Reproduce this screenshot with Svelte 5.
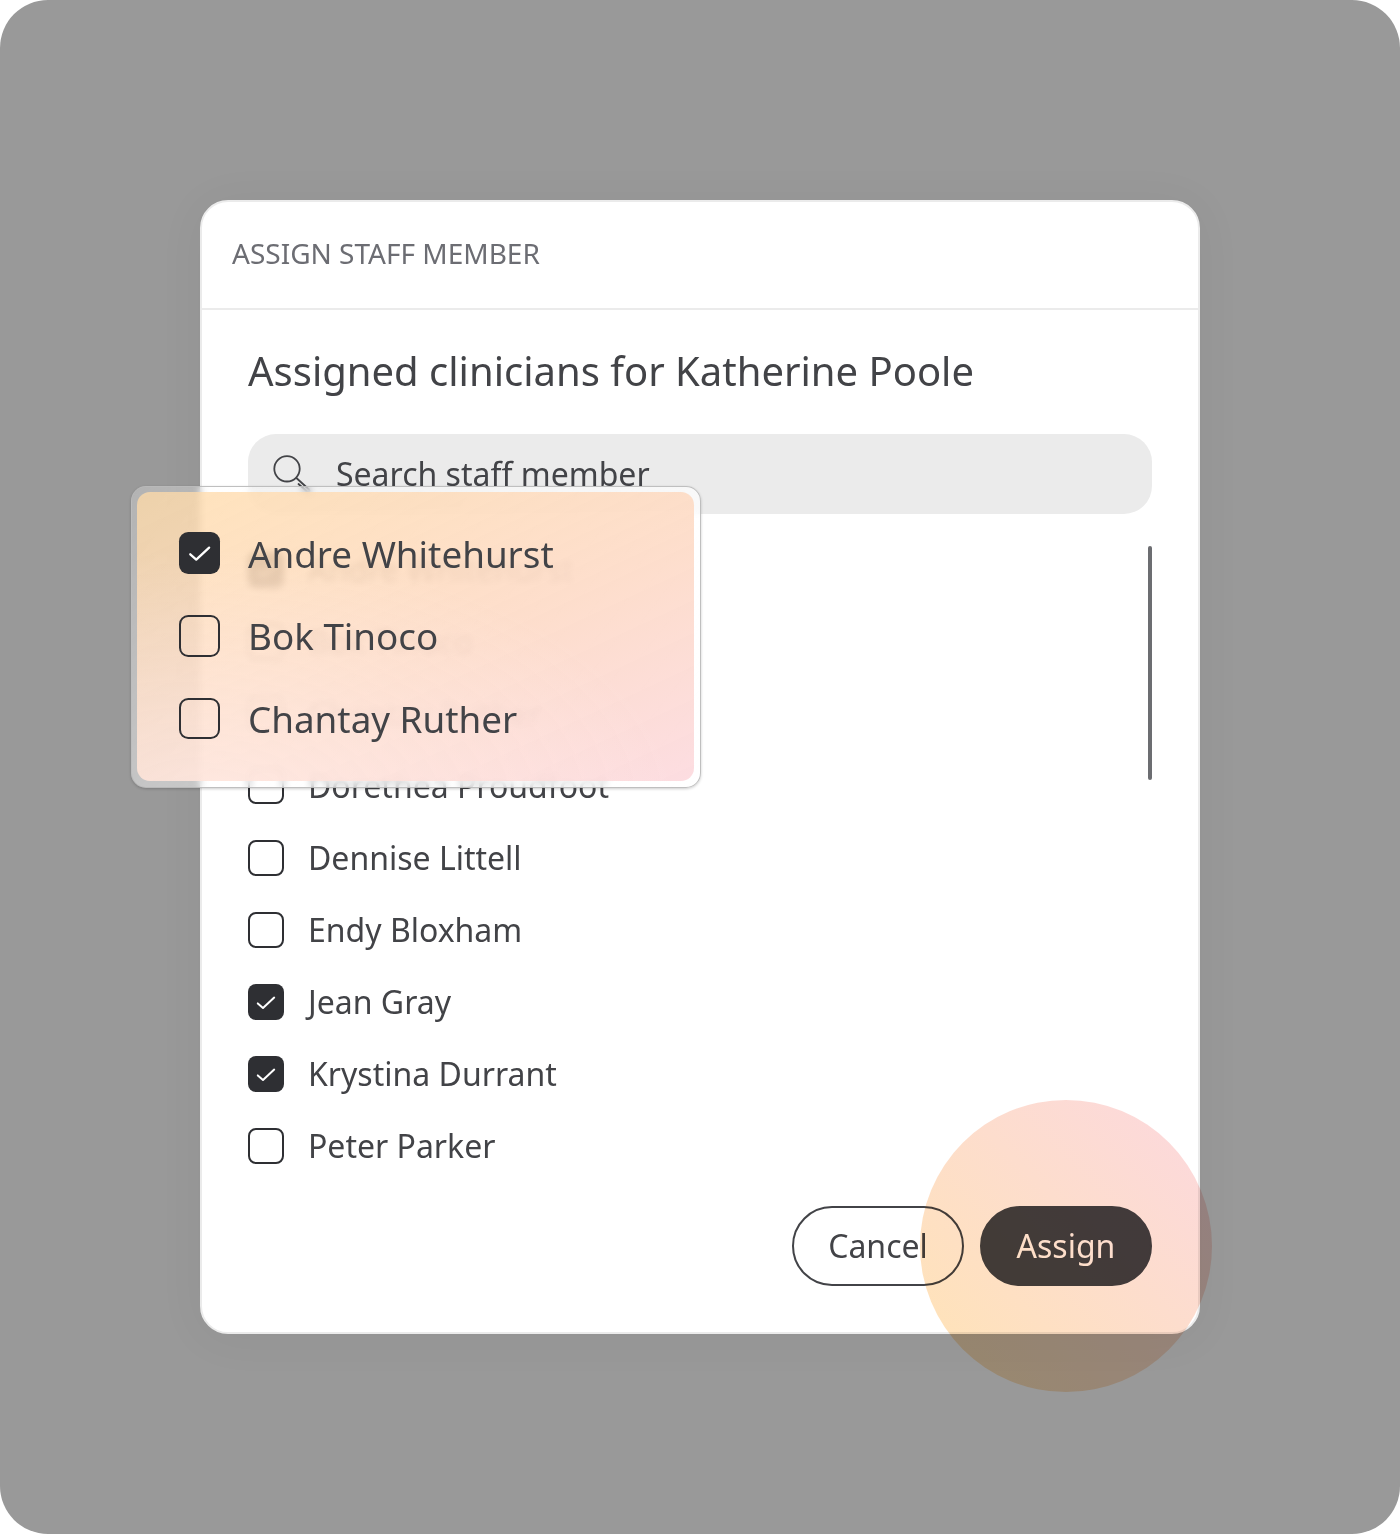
<script>
  const staff = [
    { name: 'Andre Whitehurst', checked: true },
    { name: 'Bok Tinoco', checked: false },
    { name: 'Chantay Ruther', checked: false },
    { name: 'Dorethea Proudfoot', checked: false },
    { name: 'Dennise Littell', checked: false },
    { name: 'Endy Bloxham', checked: false },
    { name: 'Jean Gray', checked: true },
    { name: 'Krystina Durrant', checked: true },
    { name: 'Peter Parker', checked: false }
  ];
  const highlighted = staff.slice(0, 3);
</script>

{#snippet row(person)}
  <li class="row">
    <span class="box" class:checked={person.checked}>
      {#if person.checked}
        <svg class="tick" viewBox="0 0 36 36" fill="none">
          <path d="M9.8 19.4L15 24L26.2 13.6" stroke="#fff" stroke-width="2" stroke-linecap="round" stroke-linejoin="round" />
        </svg>
      {/if}
    </span>
    <span class="name">{person.name}</span>
  </li>
{/snippet}

<main class="backdrop">
  <section class="dialog">
    <header class="head">ASSIGN STAFF MEMBER</header>
    <div class="body">
      <h1>Assigned clinicians for Katherine Poole</h1>
      <div class="search">
        <svg class="glass" viewBox="0 0 40 40" fill="none" stroke="#424347" stroke-width="1.8" stroke-linecap="round" stroke-linejoin="round">
          <circle cx="15" cy="14.8" r="12.7" />
          <path d="M24.4 24L37 35.5Q38.500 38 36 38.500L26.500 30" />
        </svg>
        <span>Search staff member</span>
      </div>
      <div class="list-wrap">
        <ul class="list">
          {#each staff as person}
            {@render row(person)}
          {/each}
        </ul>
        <div class="scrollbar"></div>
      </div>
      <footer class="actions">
        <button class="btn">Cancel</button>
        <button class="btn primary">Assign</button>
      </footer>
    </div>
  </section>

  <div class="spot"></div>

  <aside class="callout">
    <ul class="panel">
      {#each highlighted as person}
        {@render row(person)}
      {/each}
    </ul>
  </aside>
</main>

<style>
  :global(body) {
    background: #fff;
  }
  .backdrop {
    position: relative;
    box-sizing: border-box;
    width: 1400px;
    height: 1534px;
    padding: 200px;
    border-radius: 48px;
    background: #999;
    overflow: hidden;
    font-family: 'Noto Sans', sans-serif;
    color: #424347;
  }
  .dialog {
    box-sizing: border-box;
    width: 1000px;
    height: 1134px;
    border: 2px solid #ebebeb;
    border-radius: 28px;
    background: #fff;
    box-shadow: 0 4px 48px rgba(0, 0, 0, 0.05);
  }
  .head {
    box-sizing: border-box;
    height: 108px;
    padding: 0 30px;
    border-bottom: 2px solid #ebebeb;
    font-size: 28px;
    line-height: 102px;
    color: #6c6d73;
  }
  .body {
    padding: 31px 46px 46px;
  }
  h1 {
    margin: 0;
    font-size: 40px;
    line-height: 60px;
    font-weight: 400;
  }
  .search {
    display: flex;
    align-items: center;
    gap: 24px;
    box-sizing: border-box;
    height: 80px;
    margin-top: 33px;
    padding: 0 24px 1px;
    border-radius: 28px;
    background: #ebebeb;
    font-size: 32px;
  }
  .glass {
    width: 40px;
    height: 40px;
  }
  .list-wrap {
    display: flex;
    justify-content: space-between;
    height: 624px;
    margin-top: 32px;
  }
  ul {
    margin: 0;
    padding: 0;
    list-style: none;
  }
  .list {
    display: flex;
    flex-direction: column;
    gap: 24px;
  }
  .row {
    display: flex;
    align-items: center;
    gap: 24px;
    height: 48px;
    font-size: 32px;
    line-height: 48px;
    white-space: nowrap;
  }
  .box {
    flex: none;
    box-sizing: border-box;
    width: 36px;
    height: 36px;
    border: 2px solid #2e2f33;
    border-radius: 8px;
  }
  .box.checked {
    border: 0;
    background: #2e2f33;
  }
  .tick {
    display: block;
    width: 100%;
    height: 100%;
  }
  .scrollbar {
    width: 4px;
    height: 234px;
    border-radius: 2px;
    background: #6c6d71;
  }
  .actions {
    display: flex;
    justify-content: flex-end;
    gap: 16px;
    margin-top: 36px;
  }
  .btn {
    box-sizing: border-box;
    width: 172px;
    height: 80px;
    padding: 0 0 2px;
    border: 2px solid #424347;
    border-radius: 40px;
    background: transparent;
    font: 400 32px 'Noto Sans', sans-serif;
    color: #424347;
  }
  .btn.primary {
    background: #424347;
    color: #fff;
  }
  .spot {
    position: absolute;
    left: 920px;
    top: 1100px;
    width: 292px;
    height: 292px;
    border-radius: 50%;
    background: linear-gradient(45deg, #ffe3b8 8%, #fdddcd 56%, #fcd8de 98%);
    mix-blend-mode: multiply;
  }
  .callout {
    position: absolute;
    left: 131px;
    top: 486px;
    box-sizing: border-box;
    width: 570px;
    height: 302px;
    padding: 4.5px 6.5px 6.5px 5px;
    border: 1px solid rgba(184, 184, 184, 0.9);
    border-radius: 15px;
    background: linear-gradient(128deg, rgba(255, 255, 255, 0.26), rgba(255, 255, 255, 0.85));
    backdrop-filter: blur(3.5px);
    box-shadow: 0 1px 3px rgba(0, 0, 0, 0.2);
  }
  .panel {
    display: flex;
    flex-direction: column;
    gap: 27.6px;
    box-sizing: border-box;
    height: 100%;
    padding: 35px 42px 0;
    border-radius: 13px;
    background:
      radial-gradient(ellipse 85% 90% at 12% 110%, rgba(255, 240, 240, 0.55), rgba(255, 240, 240, 0)),
      linear-gradient(155deg, rgba(255, 219, 168, 0.77), rgba(253, 216, 196, 0.85) 58%, rgba(252, 216, 221, 0.88));
  }
  .panel .row {
    gap: 27.6px;
    height: 55.2px;
    font-size: 36.8px;
    line-height: 55.2px;
  }
  .panel .box {
    width: 41.4px;
    height: 41.4px;
    margin-top: -2px;
    border-width: 2.3px;
    border-radius: 9.2px;
  }
</style>
